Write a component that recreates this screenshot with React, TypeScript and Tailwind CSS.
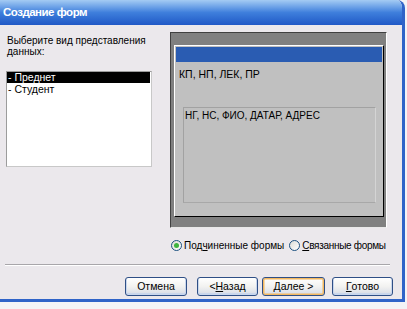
import React from "react";

const font = { fontFamily: '"Liberation Sans", Arial, sans-serif' };

function Btn({ children, def }: { children: React.ReactNode; def?: boolean }) {
  return (
    <div
      className={`h-[19px] rounded-[3px] border border-[#2f4f86] bg-gradient-to-b from-[#ffffff] via-[#f2f2f0] to-[#d6dbe6] flex items-center justify-center text-[10.5px] text-black whitespace-nowrap ${def ? "shadow-[inset_0_0_0_1.5px_#f3b860]" : "shadow-[inset_0_-1px_0_1px_#c9d6ec]"}`}
    >
      {children}
    </div>
  );
}

function Radio({ checked }: { checked?: boolean }) {
  return (
    <div className="w-[11px] h-[11px] shrink-0 rounded-full border border-[#1c5180] bg-gradient-to-br from-[#dcdcd6] to-[#ffffff] flex items-center justify-center">
      {checked && <div className="w-[5px] h-[5px] rounded-full bg-[#3fb43f]" />}
    </div>
  );
}

export default function App() {
  return (
    <div className="w-[407px] h-[309px] bg-[#f3f3f6] overflow-hidden" style={font}>
      <div className="w-[405px] h-[302px] bg-[#ebe8ec] border-r-[3px] border-b-[3px] border-[#2f63c8] rounded-tr-[8px] overflow-hidden flex flex-col">
        <div className="h-[25px] shrink-0 bg-gradient-to-b from-[#a4cbf3] via-[#3f7fdc] to-[#2058c6] flex items-center pl-[3px]">
          <span className="text-white font-bold text-[11.5px] tracking-[-0.5px]">Создание форм</span>
        </div>
        <div className="flex flex-col pt-[7px]">
          <div className="flex h-[196px]">
            <div className="ml-[6px] w-[146px] flex flex-col">
              <div className="text-[10px] leading-[11px] text-black pt-[3px] pl-[1px] whitespace-nowrap">
                Выберите вид представления
                <br />
                данных:
              </div>
              <div className="mt-[14px] h-[96px] bg-white border border-[#9c9c9c] border-r-[#c8c8c8] border-b-[#c8c8c8] p-0 flex flex-col">
                <div className="h-[11px] bg-black text-white text-[10.5px] leading-[11px] pl-[1px] mr-[1px] whitespace-nowrap">- Преднет</div>
                <div className="h-[12px] text-black text-[10.5px] leading-[12px] pl-[1px] whitespace-nowrap">- Студент</div>
              </div>
            </div>
            <div className="ml-[18px] w-[217px] h-[196px] bg-[#808080] border-l border-t border-[#404040] border-r border-b border-r-white border-b-[#e8e8e8] pt-[12px] pl-[3px] pr-[2px] pb-[10px] flex">
              <div className="flex-1 bg-[#c0c0c0] border-t border-l border-white border-r border-b border-r-black border-b-black p-[1px] flex flex-col">
                <div className="h-[15px] bg-[#2a5cb2]" />
                <div className="text-[10.5px] leading-[10px] text-black pl-[3px] mt-[7px] whitespace-nowrap">КП, НП, ЛЕК, ПР</div>
                <div className="ml-[7px] mr-[6px] mt-[28px] h-[96px] border border-[#a2a2a2] border-r-[#d4d4d4] border-b-[#a8a8a8] pl-[1px] pt-[3px]">
                  <div className="text-[10px] leading-[10px] text-black whitespace-nowrap">НГ, НС, ФИО, ДАТАР, АДРЕС</div>
                </div>
              </div>
            </div>
          </div>
          <div className="mt-[11px] h-[13px] flex items-center text-[10px] text-black whitespace-nowrap">
            <div className="ml-[171px]"><Radio checked /></div>
            <span className="ml-[2px]">Под<span className="underline">ч</span>иненные формы</span>
            <div className="ml-[5px]"><Radio /></div>
            <span className="ml-[2px] tracking-[-0.3px]"><span className="underline">С</span>вязанные формы</span>
          </div>
          <div className="mt-[12px] ml-[5px] w-[385px] h-[2px] border-t border-[#a8a6aa] border-b border-b-white" />
          <div className="mt-[11px] flex">
            <div className="ml-[125px] w-[62px]"><Btn>Отмена</Btn></div>
            <div className="ml-[10px] w-[61px]"><Btn>&lt; <span className="underline">Н</span>азад</Btn></div>
            <div className="ml-[4px] w-[63px]"><Btn def><span className="underline">Д</span>алее &gt;</Btn></div>
            <div className="ml-[7px] w-[61px]"><Btn><span className="underline">Г</span>отово</Btn></div>
          </div>
        </div>
      </div>
    </div>
  );
}
